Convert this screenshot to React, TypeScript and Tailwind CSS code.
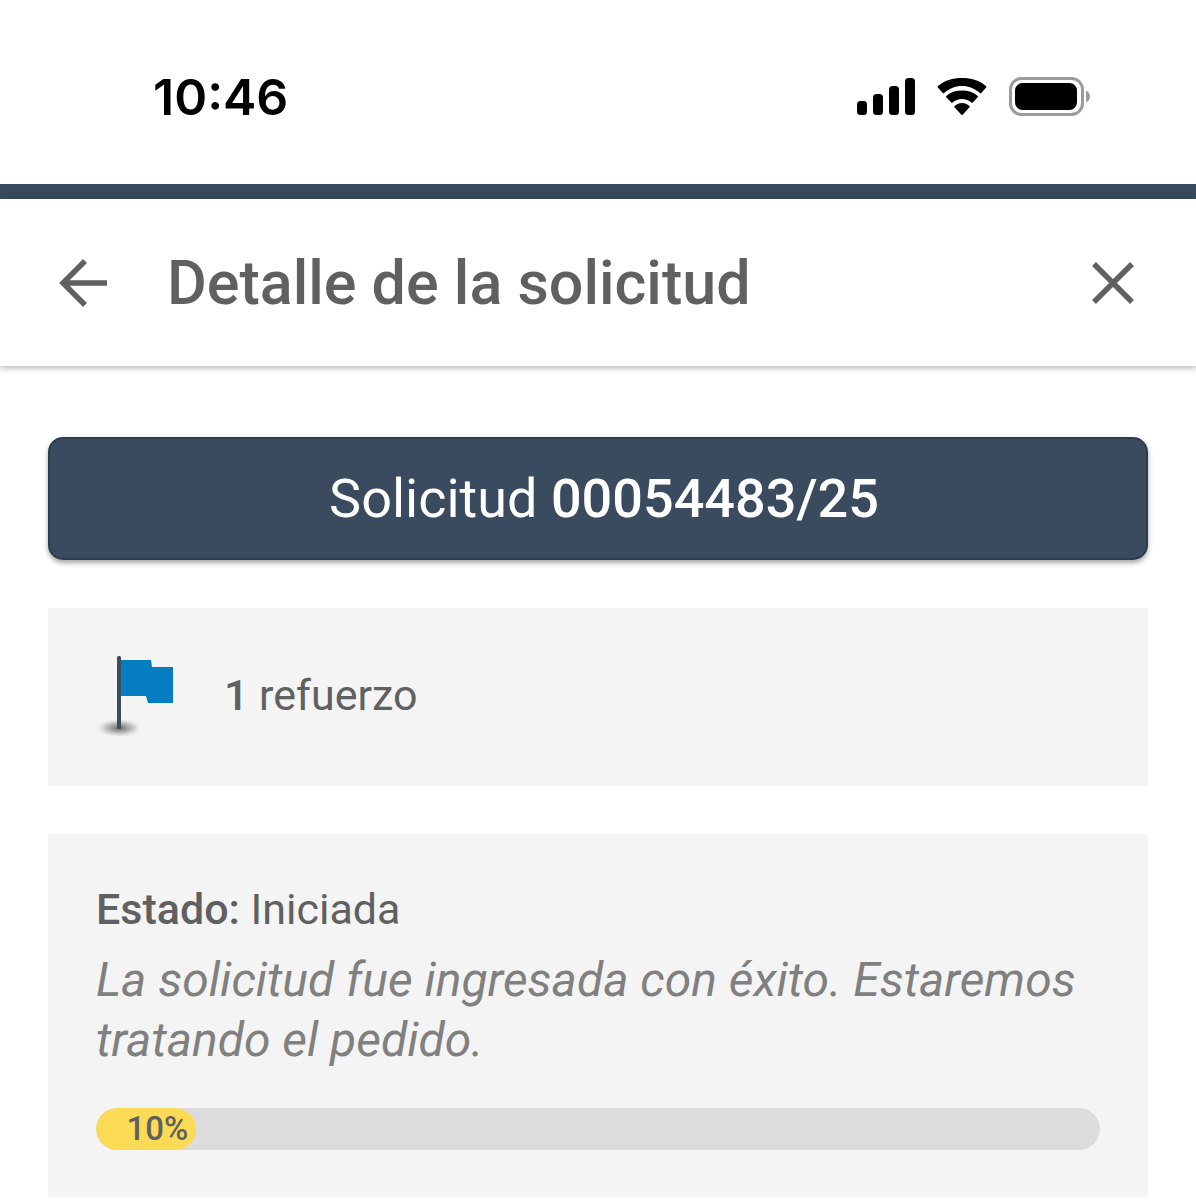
const request = {
  number: '00054483/25',
  reinforcements: 1,
  status: 'Iniciada',
  description: 'La solicitud fue ingresada con éxito. Estaremos tratando el pedido.',
  progress: 10,
}

const SignalIcon = () => (
  <svg className="h-[38px] w-[58px]" viewBox="0 0 58 38" fill="currentColor" aria-hidden="true">
    <rect x="0" y="23" width="10" height="14" rx="3.500" />
    <rect x="16" y="16" width="10" height="21" rx="3.500" />
    <rect x="32" y="8" width="10" height="29" rx="3.500" />
    <rect x="48" y="0" width="10" height="37" rx="3.500" />
  </svg>
)

const WifiIcon = () => (
  <svg className="h-[38px] w-[50px]" viewBox="0 0 50 38" fill="currentColor" aria-hidden="true">
    <path d="M25 8c6.900 0 13.200 2.700 17.900 7.100.4.400.9.400 1.300 0l5-5.500c.4-.4.400-1 0-1.400C42.700 2.500 34.300 0 25 0S7.300 2.500.8 8.200c-.4.400-.4 1 0 1.400l5 5.500c.4.400.9.400 1.300 0C11.800 10.700 18.100 8 25 8z" />
    <path d="M25 21c3.600 0 6.900 1.300 9.400 3.600.4.400.9.400 1.300 0l5-5.300c.4-.4.400-1 0-1.400C36.600 14.200 31.100 12.500 25 12.500s-11.600 1.700-15.700 5.400c-.4.400-.4 1 0 1.400l5 5.300c.4.400.9.400 1.300 0 2.500-2.300 5.800-3.600 9.400-3.600z" />
    <path d="M32.500 29.200c.4-.4.400-1 0-1.300-4.500-3.900-10.500-3.900-15 0-.4.300-.4.900 0 1.300l6.900 7.500c.3.400.9.400 1.200 0z" />
  </svg>
)

const BatteryIcon = () => (
  <svg className="h-[40px] w-[82px]" viewBox="0 0 82 40" aria-hidden="true">
    <rect x="1.500" y="1.500" width="72" height="36" rx="11" fill="none" stroke="#9b9b9b" strokeWidth="3" />
    <rect x="6" y="6" width="62" height="27" rx="7.500" fill="#000" />
    <path d="M77 13.500c5.300 2.500 5.300 9.500 0 12z" fill="#9b9b9b" />
  </svg>
)

const BackIcon = () => (
  <svg className="h-[48px] w-[48px]" viewBox="0 0 48 48" fill="none" stroke="currentColor" strokeWidth="5.500" aria-hidden="true">
    <path d="M48 24H4M26 2L4 24l22 22" />
  </svg>
)

const CloseIcon = () => (
  <svg className="h-[42px] w-[42px]" viewBox="0 0 42 42" fill="none" stroke="currentColor" strokeWidth="5.500" aria-hidden="true">
    <path d="M2 2l38 38M40 2L2 40" />
  </svg>
)

const FlagIcon = () => (
  <svg className="h-[88px] w-[80px]" viewBox="0 0 80 88" aria-hidden="true">
    <defs>
      <radialGradient id="flag-shadow">
        <stop offset="0" stopColor="#333" stopOpacity="0.75" />
        <stop offset="0.5" stopColor="#555" stopOpacity="0.4" />
        <stop offset="1" stopColor="#888" stopOpacity="0" />
      </radialGradient>
    </defs>
    <ellipse cx="23" cy="72" rx="22" ry="9" fill="url(#flag-shadow)" />
    <path d="M24 4h31l1 7h21v36H52l-2-7H24z" fill="#067dc1" />
    <rect x="21" y="0" width="4" height="73" rx="1.500" fill="#3b4c61" />
  </svg>
)

const StatusBar = () => (
  <div className="flex h-[184px] items-center justify-between pt-[9px] pr-[105px] pl-[153px] text-black">
    <time className="font-['Inter',sans-serif] text-[50px] leading-[60px] font-semibold">10:46</time>
    <div className="flex items-center gap-[22px]">
      <SignalIcon />
      <WifiIcon />
      <BatteryIcon />
    </div>
  </div>
)

const Header = () => (
  <header className="flex h-[167px] items-center pr-[62px] pl-[59px] shadow-[0_2px_6px_rgba(0,0,0,0.3)]">
    <button type="button" aria-label="Volver">
      <BackIcon />
    </button>
    <h1 className="ml-[60px] flex-1 text-[61px] leading-[72px] font-medium">Detalle de la solicitud</h1>
    <button type="button" aria-label="Cerrar">
      <CloseIcon />
    </button>
  </header>
)

const ProgressBar = ({ value }: { value: number }) => (
  <div
    role="progressbar"
    aria-label="Progreso"
    aria-valuenow={value}
    aria-valuemin={0}
    aria-valuemax={100}
    className="h-[42px] overflow-hidden rounded-full bg-[#dcdcdc]"
  >
    <div
      className="flex h-full items-center justify-end rounded-full bg-[#fbdb56] pr-2 text-[33px] leading-[42px] font-medium"
      style={{ width: `${value}%` }}
    >
      {value}%
    </div>
  </div>
)

export default function App() {
  return (
    <div className="min-h-screen bg-white font-['Roboto',sans-serif] text-[#606060]">
      <StatusBar />
      <div className="h-[15px] bg-[#38495e]" />
      <Header />

      <main className="flex flex-col gap-[48px] px-[48px] pt-[71px]">
        <button
          type="button"
          className="h-[123px] rounded-[15px] border-2 border-[#2d3d50] bg-[#3a4a5f] pl-[12px] text-[54px] leading-[64px] text-white shadow-[0_3px_5px_rgba(0,0,0,0.35)]"
        >
          Solicitud <span className="font-medium">{request.number}</span>
        </button>

        <section className="flex h-[178px] items-start gap-[48px] bg-[#f4f4f4] px-[48px] pt-[48px]">
          <FlagIcon />
          <p className="pt-[14px] text-[43px] leading-[50px]">
            <span className="font-medium">{request.reinforcements}</span> refuerzo
          </p>
        </section>

        <section className="bg-[#f4f4f4] px-[48px] pt-[45px] pb-[47px]">
          <p className="text-[43px] leading-[60px]">
            <span className="font-medium">Estado:</span> {request.status}
          </p>
          <p className="mt-[11px] text-[48px] leading-[60px] text-[#808080] italic">{request.description}</p>
          <div className="mt-[38px]">
            <ProgressBar value={request.progress} />
          </div>
        </section>
      </main>
    </div>
  )
}
